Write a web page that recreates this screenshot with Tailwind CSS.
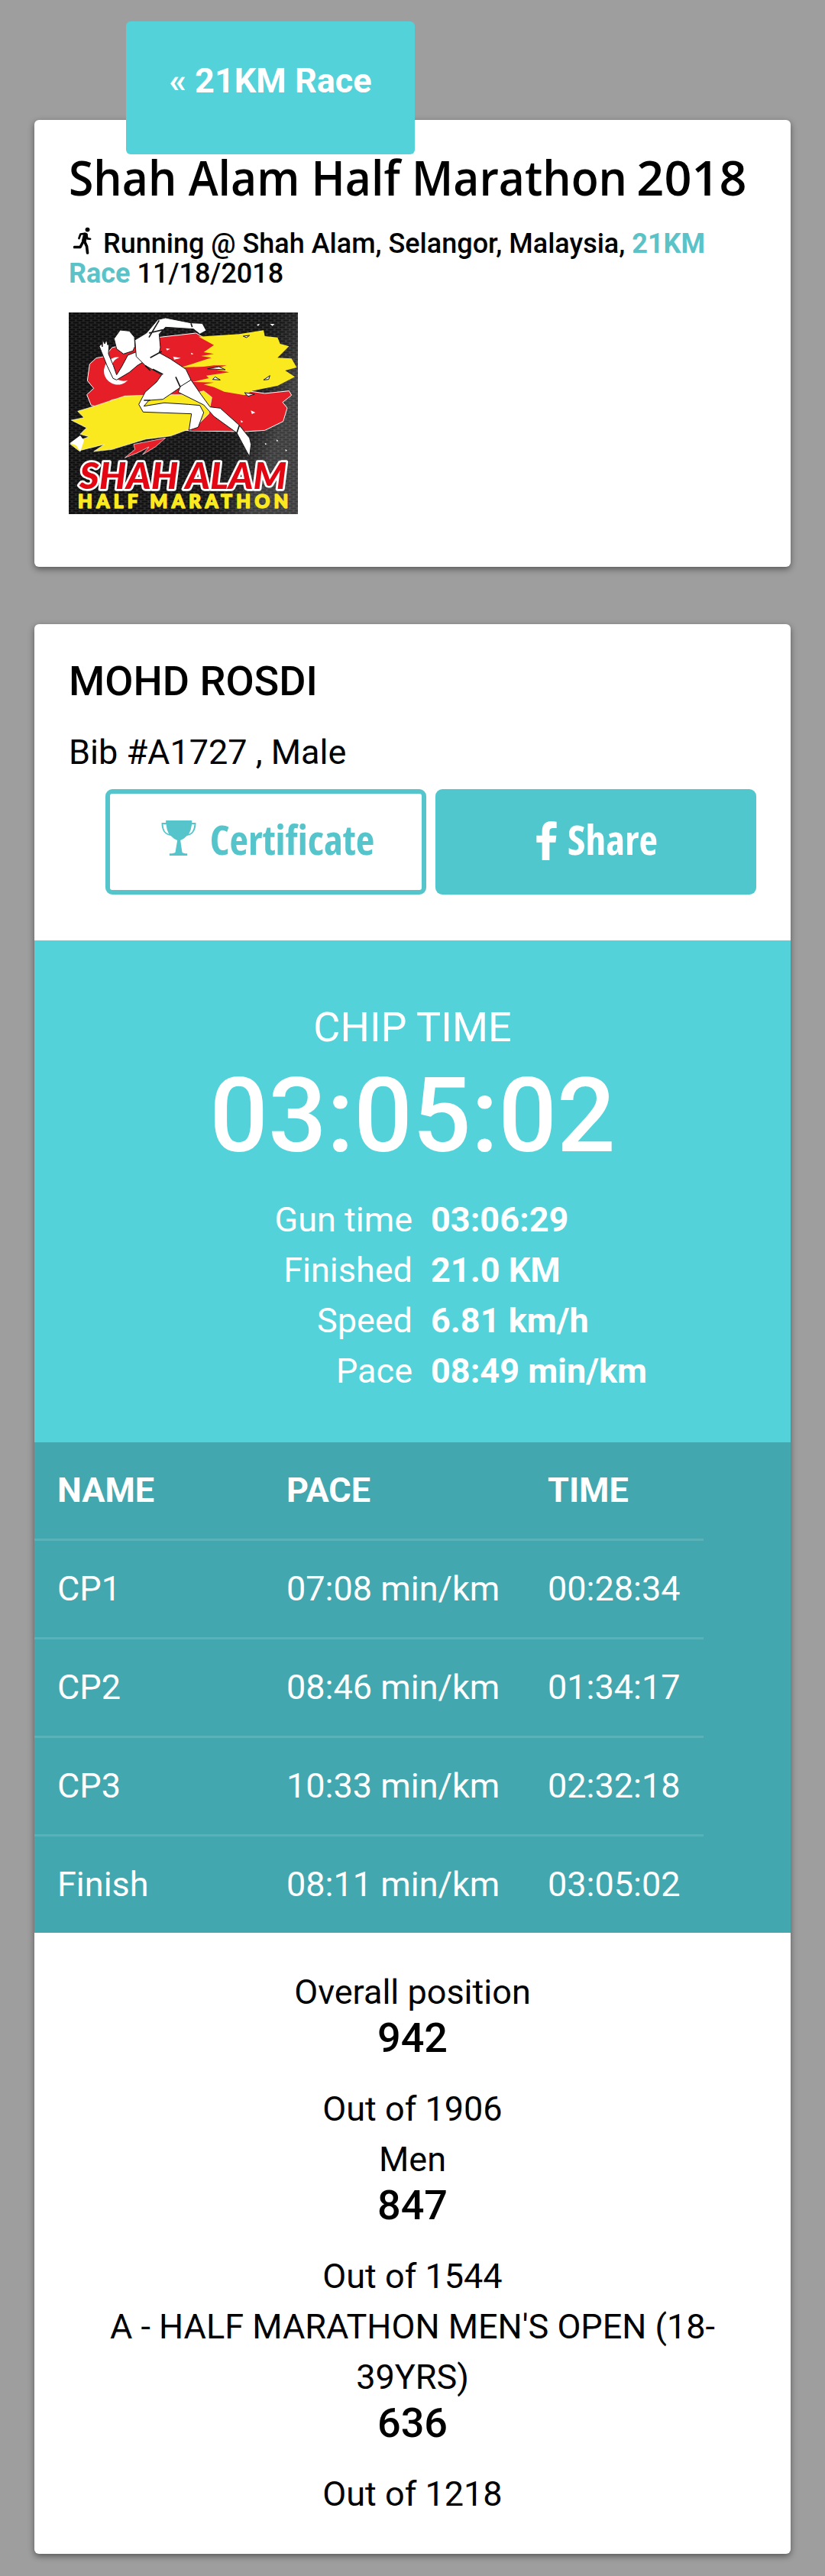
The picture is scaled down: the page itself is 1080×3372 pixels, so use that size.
<!DOCTYPE html>
<html lang="en">
<head>
<meta charset="utf-8">
<title>Shah Alam Half Marathon 2018</title>
<script src="https://cdn.jsdelivr.net/npm/@tailwindcss/browser@4"></script>
</head>
<body class="bg-[#9e9e9e] font-['Roboto',sans-serif] text-[45px] leading-[66px] text-black">
<main class="px-[45px] pt-[28px] pb-[29px]">
  <a class="relative z-10 ml-[120px] -mb-[45px] flex h-[174px] w-[378px] justify-center rounded-[6px] bg-[#53d2da] pt-[45px] font-bold whitespace-nowrap text-white">« 21KM Race</a>

  <section class="h-[585px] rounded-[6px] bg-white px-[45px] pt-[44px] shadow-[0_3px_9px_rgba(0,0,0,0.45)]">
    <h1 class="h-[96px] origin-left scale-x-[0.92] font-['Open_Sans',sans-serif] text-[64px] leading-[62px] font-semibold whitespace-nowrap">Shah Alam Half Marathon <span class="-ml-[3px] inline-block origin-left scale-x-[1.07]">2018</span></h1>
    <p class="h-[112px] text-[36px] leading-[39px] font-medium"><svg class="mr-[15px] ml-[6px] inline-block h-[36px] w-[24px] align-[-2px]" viewBox="50 50 70 110" fill="none" stroke="#000" stroke-linecap="round" stroke-linejoin="round"><circle cx="105" cy="61" r="9" fill="#000" stroke="none"/><path d="M97 82 L91 104" stroke-width="18"/><path d="M94 77 L77 79 L71 96 M101 82 L105 97 L116 98" stroke-width="8"/><path d="M88 108 L76 131 L53 131 M93 108 L102 128 L105 154" stroke-width="11"/></svg>Running @ Shah Alam, Selangor, Malaysia, <a class="font-bold text-[#5bc3c8]">21KM Race</a> 11/18/2018</p>
    <svg class="block h-[264px] w-[300px]" viewBox="30 27 900 792">
      <defs>
        <pattern id="mesh" width="30" height="18" patternUnits="userSpaceOnUse"><rect width="30" height="18" fill="#333335"/><path d="M2 4.500h22M17 13.500h13M0 13.500h9" stroke="#101011" stroke-width="6"/></pattern>
        <linearGradient id="shade" x2="1" y2="0.3"><stop offset="0" stop-color="#000" stop-opacity=".3"/><stop offset=".8" stop-color="#000" stop-opacity=".1"/><stop offset="1" stop-color="#999" stop-opacity=".3"/></linearGradient>
      </defs>
      <rect x="30" y="27" width="900" height="792" fill="url(#mesh)"/>
      <rect x="30" y="27" width="900" height="792" fill="url(#shade)"/>
      <path fill="#e61e28" stroke="#fff" stroke-width="3" d="M138 206 L172 200 200 165 240 155 380 125 530 108 600 150 660 200 700 330 800 345 895 335 905 352 870 380 888 402 872 455 800 490 720 495 510 492 400 480 330 365 200 370 160 400 118 392 101 350 128 325 103 295 112 230Z"/>
      <path fill="#fbe920" d="M540 122 L700 112 795 97 800 120 850 125 860 150 895 160 850 205 905 208 925 243 880 255 918 280 850 315 750 335 720 352 640 338 600 320 560 310 600 302 515 300 580 285 570 275 660 262 600 250 650 235 600 235 560 240 470 243 590 205 550 198 600 190 560 183 600 155Z"/>
      <path fill="#fbe920" stroke="#fff" stroke-width="2" d="M65 415 L130 395 250 355 330 352 400 350 500 350 560 335 592 360 580 425 530 475 490 490 430 512 330 525 200 565 128 573 170 545 70 570 35 543 110 515 75 505 100 480 40 450 90 440Z"/>
      <path fill="#e61e28" stroke="#fff" stroke-width="2" d="M285 545 L410 520 370 555 320 585 345 555 300 578 250 598 290 565Z"/>
      <path fill="#e61e28" d="M580 430 L545 470 508 492 600 492 640 470Z"/>
      <path fill="#fff" d="M35 540 75 510 90 530 75 575 60 550ZM228 203 A54 54 0 1 0 262 293 A48 48 0 1 1 228 203Z"/>
      <g fill="#fff" stroke="#171717" stroke-width="3" stroke-linejoin="round">
        <path d="M232 96 L268 100 288 124 290 160 282 178 245 190 218 170 208 130Z"/>
        <path d="M150 160 L158 150 162 162 163 133 171 150 178 134 183 155 188 150 186 190 205 235 218 272 238 240 262 195 300 180 350 205 300 235 268 262 218 292 204 286 180 235 160 185Z"/>
        <path d="M290 135 L335 108 380 55 410 48 510 68 555 70 570 98 545 112 520 92 410 85 385 112 390 165 385 185 430 210 490 250 510 292 470 320 400 368 345 372 325 395 405 382 500 388 545 392 560 420 538 478 502 490 512 425 322 418 305 388 330 340 375 300 395 272 330 235 295 200Z"/>
        <path d="M510 292 L468 318 460 340 560 390 600 435 690 500 730 575 740 593 746 545 740 520 700 470 625 403 585 398 550 350Z"/>
        <path d="M575 248 L620 240 645 252ZM720 342 L760 348 735 356ZM795 292 820 275 815 290ZM595 290 605 280 625 292ZM715 120 740 117 728 126Z"/>
      </g>
      <path stroke="#171717" stroke-width="5" fill="none" d="M385 58 L345 125 M400 95 L345 108 M330 235 L350 255 M350 205 L395 180 M400 270 L360 250 M450 280 L468 320 M350 372 L325 372 M510 70 L515 85 M690 500 L700 470"/>
      <path fill="#fff" d="M630 440l12 8-10 4zM680 470l12 8-12 4zM745 412l18 8-14 6zM705 450l10 6-8 4zM412 168l16 2-12 6zM440 200l30 6-26 6zM510 185l10 5-8 3zM768 75l12-4-6 9zM820 72l18 0-8 8zM845 525l8 6-6 3zM800 540l8 3-6 4zM880 565l8 3-6 4z"/>
      <g stroke-linejoin="round" class="font-['Lato',sans-serif] font-black">
        <text x="72" y="720" textLength="814" lengthAdjust="spacingAndGlyphs" class="text-[140px] italic" fill="#e30613" stroke="#fff" stroke-width="16" paint-order="stroke">SHAH ALAM</text>
        <text x="66" y="794" textLength="826" lengthAdjust="spacing" class="text-[73px]" fill="#fbe920" stroke="#fbe920" stroke-width="5">HALF MARATHON</text>
      </g>
    </svg>
  </section>

  <section class="mt-[75px] flex h-[2526px] flex-col rounded-[6px] bg-white shadow-[0_3px_9px_rgba(0,0,0,0.45)]">
    <div class="h-[414px] px-[45px] pt-[42px]">
      <h2 class="h-[93px] text-[54px] leading-[66px] font-medium">MOHD ROSDI</h2>
      <p>Bib #A1727 , Male</p>
      <div class="mt-[15px] flex justify-end gap-3 font-['Open_Sans',sans-serif] text-[53.500px] font-bold">
        <a class="flex h-[138px] w-[420px] items-center justify-center rounded-[9px] border-[6px] border-[#55c5cb] pb-[6px] pl-[5px] text-[#55c5cb]">
          <svg class="mr-[18px] h-[46px] w-[46px] -translate-y-[2px]" viewBox="275 159 137 138" fill="#55c5cb"><path d="M293 159H395V168H411Q411 214 376 219Q362 233 350 237L357 284Q359 288 377 289V297H307V289Q328 288 330 284L338 237Q325 233 312 219Q276 214 276 168H293ZM282 174Q283 206 305 213Q296 197 294 174ZM405 174H395Q392 197 383 213Q402 206 405 174Z"/></svg>
          <span class="font-stretch-[75%]">Certificate</span>
        </a>
        <a class="flex h-[138px] w-[420px] items-center justify-center rounded-[9px] bg-[#50c7cd] pb-[6px] pl-[3px] text-white">
          <svg class="mr-[14px] h-[51px] w-[27px] translate-y-[1px]" viewBox="426 159 79 153" fill="#fff"><path d="M448 312V242H426V215H448V198Q448 160 483 159Q496 159 505 161V186H491Q477 186 477 199V215H504L501 242H477V312Z"/></svg>
          <span class="font-stretch-[75%]">Share</span>
        </a>
      </div>
    </div>

    <div class="h-[657px] bg-[#53d2da] pt-[81px] text-center text-white">
      <p class="text-[54px]">CHIP TIME</p>
      <p class="mt-[8px] text-[135px] leading-[150px] font-medium">03:05:02</p>
      <dl class="mt-[28px] grid grid-cols-[495px_1fr] gap-x-[24px] text-left">
        <dt class="text-right">Gun time</dt><dd class="font-bold">03:06:29</dd>
        <dt class="text-right">Finished</dt><dd class="font-bold">21.0 KM</dd>
        <dt class="text-right">Speed</dt><dd class="font-bold">6.81 km/h</dd>
        <dt class="text-right">Pace</dt><dd class="font-bold">08:49 min/km</dd>
      </dl>
    </div>

    <div class="h-[642px] bg-[#43a7af] text-white">
      <div class="w-[876px] divide-y-[3px] divide-[#5ab2b9]">
        <div class="grid h-[129px] grid-cols-[300px_342px_1fr] items-center pl-[30px] font-bold"><span>NAME</span><span>PACE</span><span>TIME</span></div>
        <div class="grid h-[129px] grid-cols-[300px_342px_1fr] items-center pl-[30px]"><span>CP1</span><span>07:08 min/km</span><span>00:28:34</span></div>
        <div class="grid h-[129px] grid-cols-[300px_342px_1fr] items-center pl-[30px]"><span>CP2</span><span>08:46 min/km</span><span>01:34:17</span></div>
        <div class="grid h-[129px] grid-cols-[300px_342px_1fr] items-center pl-[30px]"><span>CP3</span><span>10:33 min/km</span><span>02:32:18</span></div>
        <div class="grid h-[126px] grid-cols-[300px_342px_1fr] items-center pl-[30px]"><span>Finish</span><span>08:11 min/km</span><span>03:05:02</span></div>
      </div>
    </div>

    <div class="px-[90px] pt-[45px] text-center">
      <p>Overall position</p>
      <p class="mb-[33px] text-[54px] leading-[54px] font-medium">942</p>
      <p>Out of 1906</p>
      <p>Men</p>
      <p class="mb-[33px] text-[54px] leading-[54px] font-medium">847</p>
      <p>Out of 1544</p>
      <p>A - HALF MARATHON MEN'S OPEN (18-39YRS)</p>
      <p class="mb-[33px] text-[54px] leading-[54px] font-medium">636</p>
      <p>Out of 1218</p>
    </div>
  </section>
</main>
</body>
</html>
